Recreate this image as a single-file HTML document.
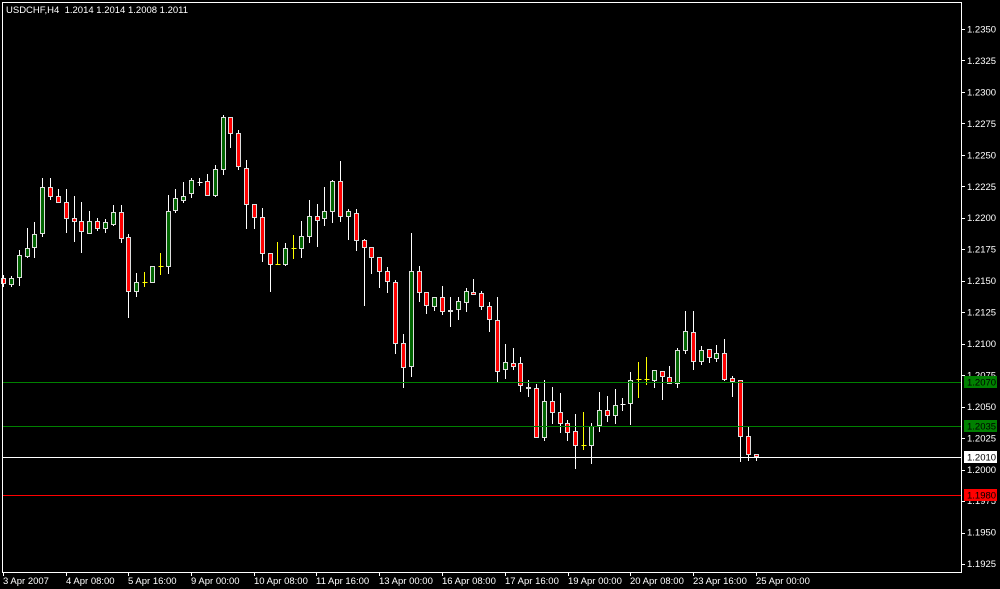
<!DOCTYPE html>
<html><head><meta charset="utf-8"><style>
html,body{margin:0;padding:0;background:#000;width:1000px;height:589px;overflow:hidden}
svg{display:block}
text{font-family:"Liberation Sans",sans-serif;font-size:9.5px;fill:#fff}
</style></head><body>
<svg id="s" width="1000" height="589" xmlns="http://www.w3.org/2000/svg">
<rect width="1000" height="589" fill="#000"/>
<g id="c"></g>
<line x1="3" y1="382.5" x2="961" y2="382.5" stroke="#008000"/>
<line x1="3" y1="426.5" x2="961" y2="426.5" stroke="#008000"/>
<line x1="3" y1="457.5" x2="961" y2="457.5" stroke="#fff"/>
<line x1="3" y1="495.5" x2="961" y2="495.5" stroke="#ff0000"/>
<rect x="2.5" y="2.5" width="959" height="570" fill="none" stroke="#fff"/>
<text x="6" y="13">USDCHF,H4&#160;&#160;1.2014 1.2014 1.2008 1.2011</text>
<g id="ax"></g>
<text x="967" y="32.5">1.2350</text>
<text x="967" y="64">1.2325</text>
<text x="967" y="95.5">1.2300</text>
<text x="967" y="127">1.2275</text>
<text x="967" y="158.5">1.2250</text>
<text x="967" y="190">1.2225</text>
<text x="967" y="221">1.2200</text>
<text x="967" y="252.5">1.2175</text>
<text x="967" y="284">1.2150</text>
<text x="967" y="315.5">1.2125</text>
<text x="967" y="347">1.2100</text>
<text x="967" y="378.5">1.2075</text>
<text x="967" y="410">1.2050</text>
<text x="967" y="441.5">1.2025</text>
<text x="967" y="473">1.2000</text>
<text x="967" y="504">1.1975</text>
<text x="967" y="535.5">1.1950</text>
<text x="967" y="567">1.1925</text>
<rect x="964" y="376" width="33" height="12" fill="#008000"/>
<text x="967" y="385.5" style="fill:#000">1.2070</text>
<rect x="964" y="420" width="33" height="12" fill="#008000"/>
<text x="967" y="429.5" style="fill:#000">1.2035</text>
<rect x="964" y="451" width="33" height="12" fill="#fff"/>
<text x="967" y="460.5" style="fill:#000">1.2010</text>
<rect x="964" y="489" width="33" height="12" fill="#ff0000"/>
<text x="967" y="498.5" style="fill:#000">1.1980</text>
<text x="3" y="584">3 Apr 2007</text>
<text x="66" y="584">4 Apr 08:00</text>
<text x="128" y="584">5 Apr 16:00</text>
<text x="191" y="584">9 Apr 00:00</text>
<text x="254" y="584">10 Apr 08:00</text>
<text x="316" y="584">11 Apr 16:00</text>
<text x="379" y="584">13 Apr 00:00</text>
<text x="442" y="584">16 Apr 08:00</text>
<text x="505" y="584">17 Apr 16:00</text>
<text x="568" y="584">19 Apr 00:00</text>
<text x="630" y="584">20 Apr 08:00</text>
<text x="693" y="584">23 Apr 16:00</text>
<text x="756" y="584">25 Apr 00:00</text>
</svg>
<script>
var d=[
[278,275,287,283],[284,276,287,278],[277,250,286,255],[256,228,258,248],[247,222,258,234],[233,178,237,187],
[187,178,200,196],[196,189,202,202],[202,189,233,218],[218,196,242,221],[221,202,253,231],[233,211,233,221],
[221,218,231,228],[228,219,233,222],[224,205,226,212],[212,205,243,238],[237,234,318,291],[291,273,297,282],
[282,272,287,282],[282,266,283,266],[266,253,275,266],[266,195,274,211],[210,189,213,198],[200,182,203,196],
[193,178,198,180],[182,178,186,182],[181,174,196,195],[195,165,197,169],[169,115,175,117],[117,117,148,133],
[133,130,170,166],[168,160,229,204],[204,204,229,217],[217,208,262,253],[253,253,292,264],[264,242,264,264],
[264,243,266,248],[248,235,259,248],[248,221,258,236],[236,200,243,216],[216,204,247,220],[218,187,226,211],
[211,180,223,181],[181,161,222,216],[216,209,240,211],[213,209,251,240],[240,239,306,247],[247,247,274,257],
[257,257,288,271],[271,267,293,281],[282,280,354,343],[343,334,388,367],[366,233,377,271],[271,266,302,292],
[292,292,314,305],[306,297,311,297],[297,286,315,311],[311,297,327,310],[309,297,320,301],[302,288,312,291],
[292,279,295,294],[293,291,310,306],[306,302,332,319],[320,297,383,371],[369,344,379,362],[363,348,370,366],
[363,357,392,385],[387,380,397,388],[388,384,438,437],[437,380,441,401],[401,387,424,412],[412,393,433,423],
[423,420,441,432],[431,414,469,445],[445,412,450,445],[445,423,464,426],[425,392,432,410],[410,396,422,415],
[415,389,424,405],[404,398,411,404],[403,372,425,380],[379,362,398,379],[379,357,385,379],[380,370,388,370],
[371,371,400,376],[377,366,384,383],[383,348,388,350],[350,311,354,331],[332,311,370,361],[361,346,365,350],
[349,349,363,357],[358,345,362,353],[353,339,381,379],[378,376,397,381],[380,380,462,436],[436,427,461,454],[454,454,461,456]];
var ns="http://www.w3.org/2000/svg",g=document.getElementById('c');
function el(t,a){var e=document.createElementNS(ns,t);for(var k in a)e.setAttribute(k,a[k]);g.appendChild(e);return e;}
d.forEach(function(b,i){
 var x=Math.round(3+i*7.84)+0.5,o=b[0],h=b[1],l=b[2],c=b[3];
 var doji=Math.abs(o-c)<1;
 var col=doji?'#ffff00':'#fff';
 if(doji&&(i==25||i==79))col='#fff';
 el('line',{x1:x,y1:h,x2:x,y2:l,stroke:col});
 if(doji){el('line',{x1:x-2,y1:o+.5,x2:x+3,y2:o+.5,stroke:col});return;}
 var top=Math.min(o,c),bot=Math.max(o,c);
 el('rect',{x:x-2,y:top+.5,width:4,height:Math.max(bot-top,1),fill:c<o?'#006400':'#ff0000',stroke:'#ddd'});
});
var ax=document.getElementById('ax');
function el2(a){var e=document.createElementNS(ns,'line');for(var k in a)e.setAttribute(k,a[k]);ax.appendChild(e);}
for(var i=0;i<18;i++){var y=Math.round(29+i*31.47)+.5;el2({x1:962,y1:y,x2:965,y2:y,stroke:'#fff'});}
[3,66,128,191,254,316,379,442,505,568,630,693,756].forEach(function(x){el2({x1:x+.5,y1:572,x2:x+.5,y2:576,stroke:'#fff'});});
</script>
</body></html>
